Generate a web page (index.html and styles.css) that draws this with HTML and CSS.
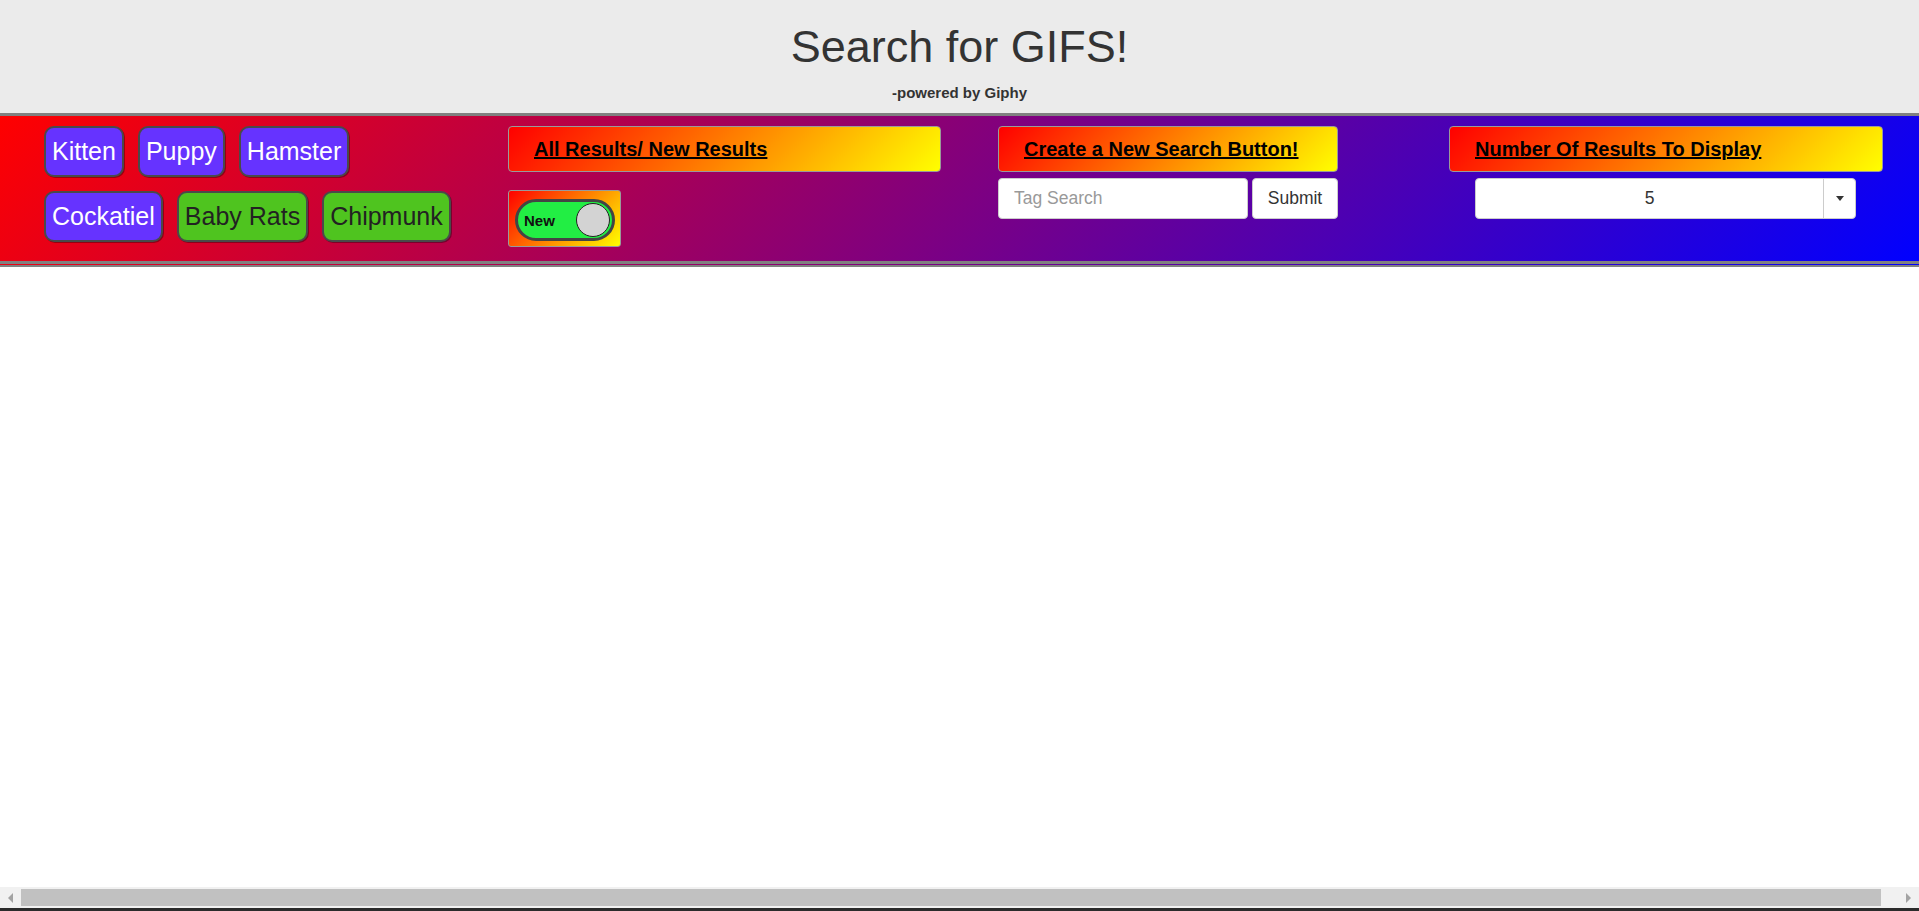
FILE: index.html
```html
<!DOCTYPE html>
<html lang="en">
<head>
<meta charset="utf-8">
<title>Search for GIFS!</title>
<link rel="stylesheet" href="styles.css">
</head>
<body>
<header class="page-header">
  <h1 class="title">Search for GIFS!</h1>
  <p class="subtitle">-powered by Giphy</p>
</header>
<nav class="nav">
  <div class="controls">
    <div class="col col-tags">
      <button class="tag tag-purple">Kitten</button>
      <button class="tag tag-purple">Puppy</button>
      <button class="tag tag-purple">Hamster</button>
      <button class="tag tag-purple">Cockatiel</button>
      <button class="tag tag-green">Baby Rats</button>
      <button class="tag tag-green">Chipmunk</button>
    </div>
    <div class="col col-mode">
      <div class="label label-mode"><span>All Results/ New Results</span></div>
      <div class="toggle-box">
        <div class="toggle">
          <span class="toggle-text">New</span>
          <span class="knob"></span>
        </div>
      </div>
    </div>
    <div class="col col-create">
      <div class="label label-create"><span>Create a New Search Button!</span></div>
      <form class="search-form">
        <input class="tag-input" type="text" placeholder="Tag Search">
        <button class="submit" type="button">Submit</button>
      </form>
    </div>
    <div class="col col-count">
      <div class="label label-count"><span>Number Of Results To Display</span></div>
      <div class="select">
        <span class="select-value">5</span>
        <span class="select-arrow"><span class="caret"></span></span>
      </div>
    </div>
  </div>
</nav>
<main class="results"></main>
<div class="hscroll">
  <span class="arrow arrow-left"></span>
  <span class="thumb"></span>
  <span class="arrow arrow-right"></span>
</div>
</body>
</html>
```

FILE: styles.css
```css
* { box-sizing: border-box; }

html, body {
  margin: 0;
  padding: 0;
  height: 100%;
  overflow: hidden;
  background: #ffffff;
  font-family: "Liberation Sans", Arial, sans-serif;
  font-size: 17.5px;
  color: #333333;
}

.page-header {
  background: #ebebeb;
  text-align: center;
  padding: 22px 0 11px;
  height: 113px;
}

.title {
  margin: 0;
  font-size: 45px;
  font-weight: 400;
  line-height: 1.1;
  color: #333333;
}

.subtitle {
  margin: 10px 0 0;
  font-size: 15px;
  font-weight: 700;
  line-height: 21px;
  color: #333333;
}

.nav {
  background: linear-gradient(135deg, #ff0000, #0000ff);
  border-top: 3px solid #808080;
  border-bottom: 2px solid #808080;
  padding-bottom: 1px;
}

.controls {
  display: grid;
  grid-template-columns: 464px 490px 451px 1fr;
  padding: 10px 0 0 44px;
  height: 148px;
  border-bottom: 3px solid #808080;
}

.col {
  display: flex;
  flex-direction: column;
}

.col-tags {
  flex-direction: row;
  flex-wrap: wrap;
  align-content: flex-start;
  gap: 14px;
  max-width: 420px;
}

.tag {
  font-family: "Liberation Sans", Arial, sans-serif;
  font-size: 25px;
  line-height: 35px;
  padding: 6px 6px;
  border: 2px solid #4a4a4a;
  border-radius: 10px;
  height: 51px;
  cursor: pointer;
  box-shadow: 1px 1px 0 rgba(0, 0, 0, 0.35);
}

.tag-purple {
  background: #6633ff;
  color: #ffffff;
}

.tag-green {
  background: #4fc41f;
  color: #222222;
}

.label {
  height: 46px;
  border: 1px solid #9a9a9a;
  border-radius: 4px;
  background: linear-gradient(135deg, #ff0000, #ffff00);
  padding-left: 25px;
  font-size: 20px;
  font-weight: 700;
  line-height: 44px;
  color: #000000;
}

.label span { text-decoration: underline; }

.label-mode { width: 433px; }
.label-create { width: 340px; }
.label-count { width: 434px; }

.toggle-box {
  margin-top: 18px;
  width: 113px;
  height: 57px;
  border: 1px solid #9a9a9a;
  border-radius: 3px;
  background: linear-gradient(135deg, #ff0000, #ffff00);
  padding: 8px 0 0 6px;
}

.toggle {
  width: 100px;
  height: 42px;
  border: 3px solid #444444;
  border-radius: 21px;
  background: #22ee44;
  display: flex;
  align-items: center;
  justify-content: space-between;
  padding: 0 2px 0 6px;
}

.toggle-text {
  font-size: 15px;
  font-weight: 700;
  color: #111111;
  margin-top: 1px;
}

.knob {
  width: 34px;
  height: 34px;
  border-radius: 50%;
  background: #d3d3d3;
  border: 1px solid #222222;
}

.search-form {
  margin: 6px 0 0;
  display: flex;
  gap: 4px;
}

.tag-input {
  width: 250px;
  height: 41px;
  border: 1px solid #cccccc;
  border-radius: 4px;
  padding: 0 15px;
  font-family: "Liberation Sans", Arial, sans-serif;
  font-size: 17.5px;
  color: #555555;
  background: #ffffff;
  outline: none;
}

.tag-input::placeholder { color: #999999; }

.submit {
  width: 86px;
  height: 41px;
  border: 1px solid #cccccc;
  border-radius: 4px;
  background: #ffffff;
  color: #333333;
  font-family: "Liberation Sans", Arial, sans-serif;
  font-size: 17.5px;
  padding: 0;
}

.select {
  margin: 6px 0 0 26px;
  width: 381px;
  height: 41px;
  background: #ffffff;
  border: 1px solid #cccccc;
  border-radius: 4px;
  display: flex;
}

.select-value {
  flex: 1;
  text-align: center;
  line-height: 39px;
  color: #333333;
}

.select-arrow {
  width: 32px;
  border-left: 1px solid #cccccc;
  display: flex;
  align-items: center;
  justify-content: center;
}

.caret {
  width: 0;
  height: 0;
  border-left: 4px solid transparent;
  border-right: 4px solid transparent;
  border-top: 5px solid #333333;
  margin-left: 1px;
}

.results { background: #ffffff; }

.hscroll {
  position: fixed;
  left: 0;
  right: 0;
  bottom: 0;
  height: 24px;
  background: #f1f1f1;
  border-bottom: 3px solid #2b2b2b;
  display: flex;
  align-items: center;
  padding: 0 8px;
}

.thumb {
  flex: 1;
  height: 17px;
  background: #c1c1c1;
  margin: 0 25px 0 8px;
}

.arrow {
  width: 0;
  height: 0;
  border-top: 5px solid transparent;
  border-bottom: 5px solid transparent;
}

.arrow-left { border-right: 5px solid #a3a3a3; }
.arrow-right { border-left: 5px solid #a3a3a3; }
```
